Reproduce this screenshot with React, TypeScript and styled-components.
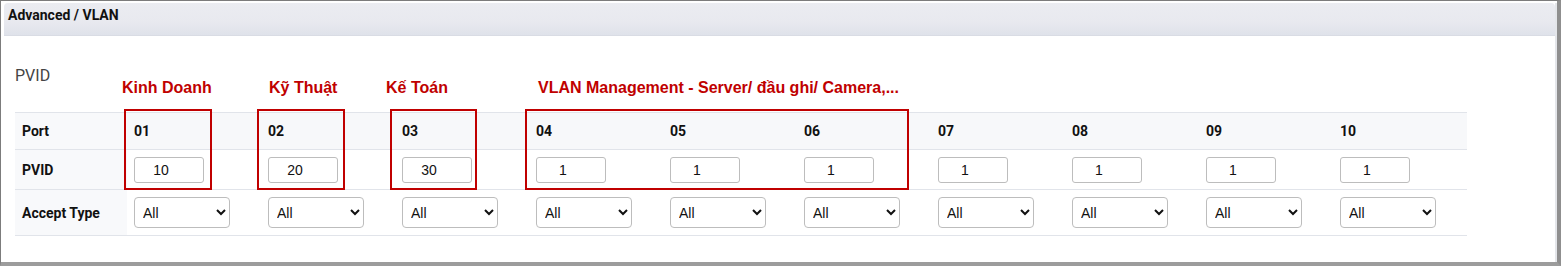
import styled, { createGlobalStyle } from 'styled-components';

const GlobalStyle = createGlobalStyle`
  html, body {
    margin: 0;
    padding: 0;
    background: #ffffff;
  }
  body {
    font-family: Roboto, 'Liberation Sans', Arial, sans-serif;
  }
`;

const PORTS = ['01', '02', '03', '04', '05', '06', '07', '08', '09', '10'];
const PVIDS = ['10', '20', '30', '1', '1', '1', '1', '1', '1', '1'];

// coloured notes drawn over the table (x relative to the table's left edge)
const GROUPS = [
  { label: 'Kinh Doanh', labelX: 107, boxX: 109, boxW: 88 },
  { label: 'Kỹ Thuật', labelX: 254, boxX: 242, boxW: 88 },
  { label: 'Kế Toán', labelX: 371, boxX: 375, boxW: 87 },
  { label: 'VLAN Management - Server/ đầu ghi/ Camera,...', labelX: 523, boxX: 510, boxW: 384 },
];

const Frame = styled.div`
  box-sizing: border-box;
  width: 1561px;
  height: 266px;
  border-left: 1px solid #7c7c7c;
  border-top: 1px solid #7c7c7c;
  border-right: 4px solid #8f8f8f;
  border-bottom: 4px solid #9c9c9c;
  padding: 2px 0 0 3px;
  background: #ffffff;
`;

const Panel = styled.div`
  height: 100%;
  border-right: 2px solid #e4e6ea;
  display: flex;
  flex-direction: column;
`;

const Header = styled.div`
  height: 32px;
  flex: 0 0 auto;
  padding-left: 4px;
  border-radius: 4px 4px 0 0;
  background: linear-gradient(#ebecf1, #e8e9ef 60%, #dfe2ea);
  border-bottom: 1px solid #d9dce4;
  font-size: 14px;
  font-weight: 700;
  line-height: 24px;
  color: #111111;
`;

const Content = styled.div`
  padding: 30px 0 0 11px;
`;

const SectionTitle = styled.div`
  font-size: 16px;
  line-height: 19px;
  color: #444444;
  height: 19px;
`;

const TableWrap = styled.div`
  position: relative;
  margin-top: 27px;
  width: 1452px;
`;

const Row = styled.div<{ $height: number; $shaded?: boolean; $last?: boolean }>`
  box-sizing: border-box;
  display: grid;
  grid-template-columns: 112px repeat(10, 134px);
  align-items: center;
  height: ${p => p.$height}px;
  border-top: 1px solid #e1e4ea;
  border-bottom: ${p => (p.$last ? '1px solid #e1e4ea' : 'none')};
  background: ${p => (p.$shaded ? '#f7f8fa' : '#ffffff')};
`;

const LabelCell = styled.div`
  align-self: stretch;
  display: flex;
  align-items: center;
  padding-left: 7px;
  background: #f8f9fb;
  font-size: 14px;
  font-weight: 700;
  color: #111111;
`;

const Cell = styled.div<{ $bold?: boolean }>`
  padding-left: 7px;
  font-size: 14px;
  font-weight: ${p => (p.$bold ? 700 : 400)};
  color: #111111;
`;

const PvidInput = styled.input`
  box-sizing: border-box;
  width: 70px;
  height: 26px;
  margin: 0;
  padding: 0 16px 0 0;
  border: 1px solid #bdbdbd;
  border-radius: 3px;
  background: #ffffff;
  font-family: 'Liberation Sans', Arial, sans-serif;
  font-size: 14px;
  color: #111111;
  text-align: center;
`;

const TypeSelect = styled.select`
  box-sizing: border-box;
  width: 96px;
  height: 31px;
  margin: 0;
  padding: 0 4px;
  border: 1px solid #bdbdbd;
  border-radius: 4px;
  background: #ffffff;
  font-family: 'Liberation Sans', Arial, sans-serif;
  font-size: 14px;
  color: #111111;
`;

const GroupBox = styled.div`
  position: absolute;
  top: -3px;
  height: 81px;
  box-sizing: border-box;
  border: 2px solid #c00000;
  pointer-events: none;
`;

const GroupLabel = styled.div`
  position: absolute;
  top: -33px;
  white-space: nowrap;
  font-family: 'Liberation Sans', Arial, sans-serif;
  font-size: 16px;
  font-weight: 700;
  color: #c00000;
`;

const App = () => {
  return (
    <>
      <GlobalStyle />
      <Frame>
        <Panel>
          <Header>Advanced / VLAN</Header>
          <Content>
            <SectionTitle>PVID</SectionTitle>
            <TableWrap>
              <Row $height={37} $shaded>
                <LabelCell>Port</LabelCell>
                {PORTS.map(p => (
                  <Cell key={p} $bold>
                    {p}
                  </Cell>
                ))}
              </Row>
              <Row $height={40}>
                <LabelCell>PVID</LabelCell>
                {PVIDS.map((v, i) => (
                  <Cell key={i}>
                    <PvidInput defaultValue={v} />
                  </Cell>
                ))}
              </Row>
              <Row $height={47} $last>
                <LabelCell>Accept Type</LabelCell>
                {PORTS.map(p => (
                  <Cell key={p}>
                    <TypeSelect defaultValue="All">
                      <option>All</option>
                      <option>Tagged</option>
                      <option>Untagged</option>
                    </TypeSelect>
                  </Cell>
                ))}
              </Row>
              {GROUPS.map(g => (
                <div key={g.label}>
                  <GroupLabel style={{ left: g.labelX }}>{g.label}</GroupLabel>
                  <GroupBox style={{ left: g.boxX, width: g.boxW }} />
                </div>
              ))}
            </TableWrap>
          </Content>
        </Panel>
      </Frame>
    </>
  );
};

export default App;
